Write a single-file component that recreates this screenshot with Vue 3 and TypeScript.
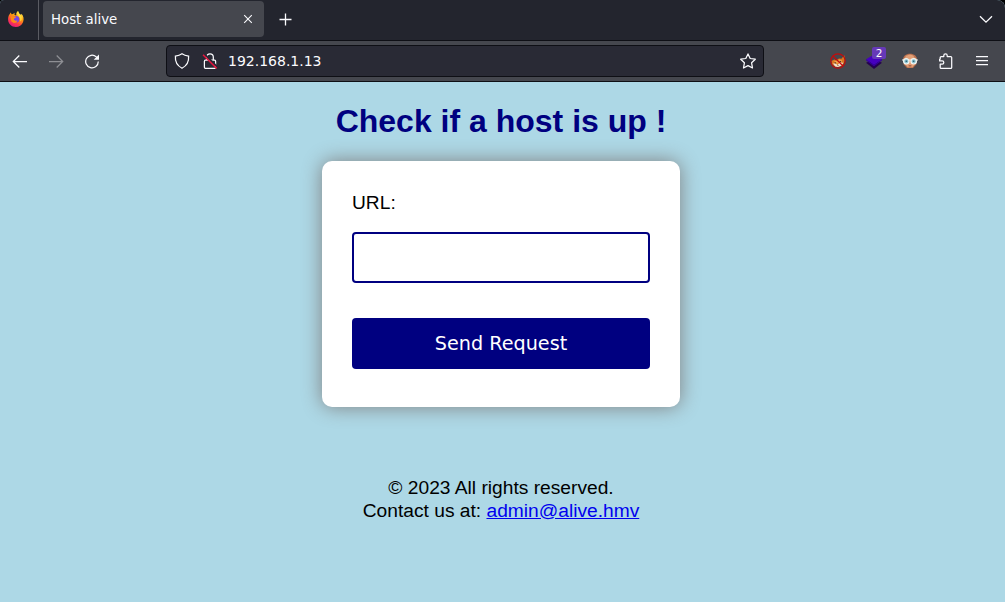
<script setup lang="ts">
import { ref } from 'vue'

const tabTitle = 'Host alive'
const address = '192.168.1.13'
const badgeCount = 2
const url = ref('')
</script>

<template>
  <div class="window">
    <header class="tabs">
      <div class="brand">
        <svg width="18" height="18" viewBox="0 0 18 18">
          <defs>
            <linearGradient id="flame" x1=".8" y1="0" x2=".25" y2="1">
              <stop offset="0" stop-color="#fff44f" />
              <stop offset=".4" stop-color="#ff980e" />
              <stop offset=".7" stop-color="#ff3b47" />
              <stop offset="1" stop-color="#e31587" />
            </linearGradient>
          </defs>
          <path fill="url(#flame)" d="M2.6 4.2 3.7 2.5 4.6 4.3 6.1 4.1 7.5 2.8 7.5 4.9 9.3 5.5 9.3 2.9 11 1.1 12 3.4 14 5 14.5 3.8C16.5 6 17.2 8.9 16.1 11.9 14.8 15.2 12 17 8.9 17 4.5 17 1.2 13.8 1.1 9.8 1 7.5 1.5 5.4 2.6 4.2Z" />
          <path fill="#ffdc3e" d="M10 3 11 1.1 12.2 3.6 14 5.2 14.8 7 14.6 10 13.3 11.5 13.1 8.2 11.5 6Z" />
          <circle cx="9" cy="9.2" r="3.3" fill="#7543e5" />
          <path fill="#ff8a16" d="M3.6 6.3 8.4 6.6 9 7.5 7.1 8.6 6.9 9.8 8.5 10.8 10.6 10.6 9.1 12.8 6.6 13 4.2 11.3Z" />
        </svg>
      </div>
      <div class="tab">
        <span>{{ tabTitle }}</span>
        <svg width="10" height="10" viewBox="0 0 10 10"><path d="m1.2 1.2 7.6 7.6m0-7.6L1.2 8.8" /></svg>
      </div>
      <svg class="new-tab" width="14" height="14" viewBox="0 0 14 14"><path d="M6.5 .5v12M.5 6.5h12" stroke-width="1.3" /></svg>
      <svg class="all-tabs" width="14" height="9" viewBox="0 0 14 9"><path d="m1 1.2 6 6 6-6" stroke-width="1.3" /></svg>
    </header>
    <nav class="toolbar">
      <svg class="back" width="16" height="16" viewBox="0 0 16 16"><path d="M15 8.5H1.5m5.8-6-6 6 6 6" /></svg>
      <svg class="forward" width="16" height="16" viewBox="0 0 16 16"><path d="M1 8.5h13.5m-5.8-6 6 6-6 6" /></svg>
      <svg class="reload" width="16" height="16" viewBox="0 0 16 16">
        <path d="M14.3 8.5a6.3 6.3 0 1 1-2-4.6l1.7 1.6" />
        <path d="M15 1.5v5.3H9.7Z" fill="#fbfbfe" stroke="none" />
      </svg>
      <div class="address">
        <svg width="16" height="16" viewBox="0 0 16 16"><path d="M8 .8c2.1 1.5 4 2 6.6 2.3C15 8.3 12.4 12.9 8 15.2 3.6 12.9 1 8.3 1.4 3.1 4 2.8 5.9 2.3 8 .8Z" /></svg>
        <svg class="lock" width="16" height="16" viewBox="0 0 16 16">
          <path d="M4.7 7V4.1a3.3 3.3 0 0 1 6.6 0V7M3.4 7.2h9.2a1 1 0 0 1 1 1v6.1a1 1 0 0 1-1 1H3.4a1 1 0 0 1-1-1V8.2a1 1 0 0 1 1-1Z" />
          <path d="m2.3.9 13 13" stroke="#292a35" stroke-width="2" />
          <path d="m1 1.7 13.7 13.7" stroke="#e2143d" stroke-width="1.5" />
        </svg>
        <span>{{ address }}</span>
        <svg class="star" width="16" height="16" viewBox="0 0 16 16"><path stroke-linejoin="round" d="m8 .9 2.2 4.6 5.1.7-3.7 3.6.9 5.2L8 12.6 3.5 15l.9-5.2L.7 6.2l5.1-.7Z" /></svg>
      </div>
      <div class="extensions">
        <div class="extension">
          <svg class="art" width="16" height="16" viewBox="0 0 16 16">
            <path fill="#d9761f" d="m1.5 8 2.7-1.5L6 7.2l3-1.6 2.4.2 2.9-3.5.6 4-.8 3.4-1.8 3-3.8 1.4-3.6-.6-3-2.6Z" />
            <path fill="#f3a14a" d="m4 7.8 2.3.3L9.5 6.5l2.7 1-1.4 2.3-4.9 1Z" />
            <path fill="#f1dfcf" d="m3 10.6 2.6-.2 1.9 1.5 2.4-2.3 3.4.2-1.8 2.6-3.6 1.5-2.6-.5Z" />
            <path fill="#3a2924" d="m4.6 9.3 1.5.2v1.1l-1.3-.3Zm5-1 1.5-.3-.3 1.2-1.2.3ZM7.2 12h1.5L8 13Z" />
            <circle cx="8" cy="8" r="7.2" stroke="#c40b0b" stroke-width="1.2" />
            <path d="m3 3 10 10" stroke="#c40b0b" stroke-width="1.2" />
          </svg>
        </div>
        <div class="extension">
          <svg class="art" width="18" height="18" viewBox="0 0 18 18">
            <path fill="#250050" d="m1 10.8 8-3.2 8 3.2L9 17Z" />
            <path fill="#4600bf" d="m1 7.2 8-4.8 8 4.8L9 13Z" />
            <path fill="#3400a0" d="m1 7.2 8 5.8 8-5.8v1.3l-8 5.7-8-5.7Z" />
          </svg>
          <span class="badge">{{ badgeCount }}</span>
        </div>
        <div class="extension">
          <svg class="art" width="16" height="16" viewBox="0 0 16 16">
            <path fill="#b9714f" d="M1 7C1 3 4 .8 8 .8S15 3 15 7l-.8 4.5L11 15H5l-3.2-3.5Z" />
            <path fill="#e2a077" d="M2.5 6 4 2.8 8 1.6l3.2 1L13.5 6l-.5 5-2.4 3.2H5.8L3 11Z" />
            <path d="M0 7h16" stroke="#eef3f0" stroke-width="1.2" />
            <circle cx="4.3" cy="8.3" r="2.7" fill="#8fc6d4" stroke="#f0f5f2" stroke-width="1.2" />
            <circle cx="11.7" cy="8.3" r="2.7" fill="#8fc6d4" stroke="#f0f5f2" stroke-width="1.2" />
            <path fill="#316879" d="M3.6 7.5h1.6v1.6H3.6Zm7.2 0h1.6v1.6h-1.6Z" />
            <path d="M6.6 12.8h2.8" stroke="#995542" />
          </svg>
        </div>
        <div class="extension">
          <svg width="16" height="16" viewBox="0 0 16 16"><path stroke-linejoin="round" d="M2.2 6V4.5q0-.9.9-.9h2.7V2.5a1.7 1.7 0 0 1 3.4 0v1.1h3.6q.9 0 .9.9v9.9q0 .9-.9.9H3.1q-.9 0-.9-.9v-3.3h2a1.6 1.6 0 0 0 0-3.2H1.6V6.6q0-.6.6-.6Z" /></svg>
        </div>
        <div class="extension">
          <svg width="14" height="16" viewBox="0 0 14 16"><path d="M1 3.5h12M1 7.5h12M1 11.5h12" /></svg>
        </div>
      </div>
    </nav>
    <main class="page">
      <h1>Check if a host is up !</h1>
      <form class="card" @submit.prevent>
        <label for="url">URL:</label>
        <input id="url" v-model="url" type="text" />
        <button type="submit">Send Request</button>
      </form>
      <footer>
        <p>© 2023 All rights reserved.</p>
        <p>Contact us at: <a href="mailto:admin@alive.hmv">admin@alive.hmv</a></p>
      </footer>
    </main>
  </div>
</template>

<style>
body {
  margin: 0;
  background: #000;
}
</style>

<style scoped>
* {
  box-sizing: border-box;
}

.window {
  display: flex;
  flex-direction: column;
  height: 602px;
  overflow: hidden;
  border-radius: 4px 8px 0 0;
  background: #add8e6;
  font-family: "DejaVu Sans", sans-serif;
}

svg {
  display: block;
  flex: none;
  fill: none;
  stroke: #fbfbfe;
  stroke-width: 1.25;
}

.brand svg,
.art {
  stroke: none;
}

.tabs {
  display: flex;
  align-items: center;
  flex: none;
  height: 41px;
  padding: 0 12px 3px 0;
  border-bottom: 1px solid #0e0f15;
  background: #23252e;
}

.brand {
  width: 39px;
  height: 40px;
  margin-bottom: -3px;
  padding: 10px 0 0 7px;
  border-right: 1px solid #5b5c63;
}

.tab {
  display: flex;
  align-items: center;
  justify-content: space-between;
  width: 221px;
  height: 36px;
  margin-left: 4px;
  margin-top: 1px;
  padding: 0 11px 0 8px;
  border-radius: 4px;
  background: #45474e;
  color: #fbfbfe;
  font-size: 13.33px;
}

.tab svg {
  stroke-width: 1.1;
}

.new-tab {
  margin: 2px 0 0 15px;
}

.all-tabs {
  margin: 1px 0 0 auto;
}

.toolbar {
  display: flex;
  align-items: center;
  flex: none;
  height: 41px;
  padding: 0 5px 0 12px;
  border-bottom: 1px solid #0e0f15;
  background: #45474e;
}

.forward {
  margin-left: 20px;
  opacity: .4;
}

.reload {
  margin-left: 20px;
}

.address {
  display: flex;
  align-items: center;
  width: 598px;
  height: 32px;
  margin-left: 66px;
  padding: 0 7px;
  border: 1px solid #0e0f15;
  border-radius: 4px;
  background: #292a35;
  color: #fbfbfe;
  font-size: 14px;
}

.lock {
  margin: 0 10px 0 12px;
}

.star {
  margin-left: auto;
}

.extensions {
  display: flex;
  align-items: center;
  margin-left: auto;
}

.extension {
  position: relative;
  display: flex;
  justify-content: center;
  width: 36px;
}

.badge {
  position: absolute;
  top: -5px;
  left: 16px;
  width: 14px;
  height: 12px;
  border-radius: 2px;
  background: #6639b7;
  color: #fff;
  font-size: 10.5px;
  line-height: 12px;
  text-align: center;
}

.page {
  display: flex;
  flex-direction: column;
  align-items: center;
  flex: 1;
  padding: 20px 3px 0 0;
  color: #000;
  font-family: "Liberation Sans", Arial, sans-serif;
  font-size: 19.2px;
}

h1 {
  margin: 0;
  color: #000080;
  font-size: 32px;
  line-height: 38px;
}

.card {
  display: flex;
  flex-direction: column;
  width: 358px;
  height: 246px;
  margin-top: 21px;
  padding: 30px;
  border-radius: 10px;
  background: #fff;
  box-shadow: 0 0 20px gray;
}

label {
  line-height: 23px;
}

input {
  width: 100%;
  height: 51px;
  margin: 18px 0 35px;
  padding: 10px;
  border: 2px solid #000080;
  border-radius: 4px;
  outline: none;
  background: #fff;
  font: inherit;
}

button {
  width: 100%;
  height: 51px;
  padding: 0;
  border: 0;
  border-radius: 4px;
  background: #000080;
  color: #fff;
  font-family: "DejaVu Sans", sans-serif;
  font-size: 19.2px;
}

footer {
  margin-top: 69px;
  line-height: 23px;
  text-align: center;
}

p {
  margin: 0;
}

a {
  color: #0000ee;
}
</style>
